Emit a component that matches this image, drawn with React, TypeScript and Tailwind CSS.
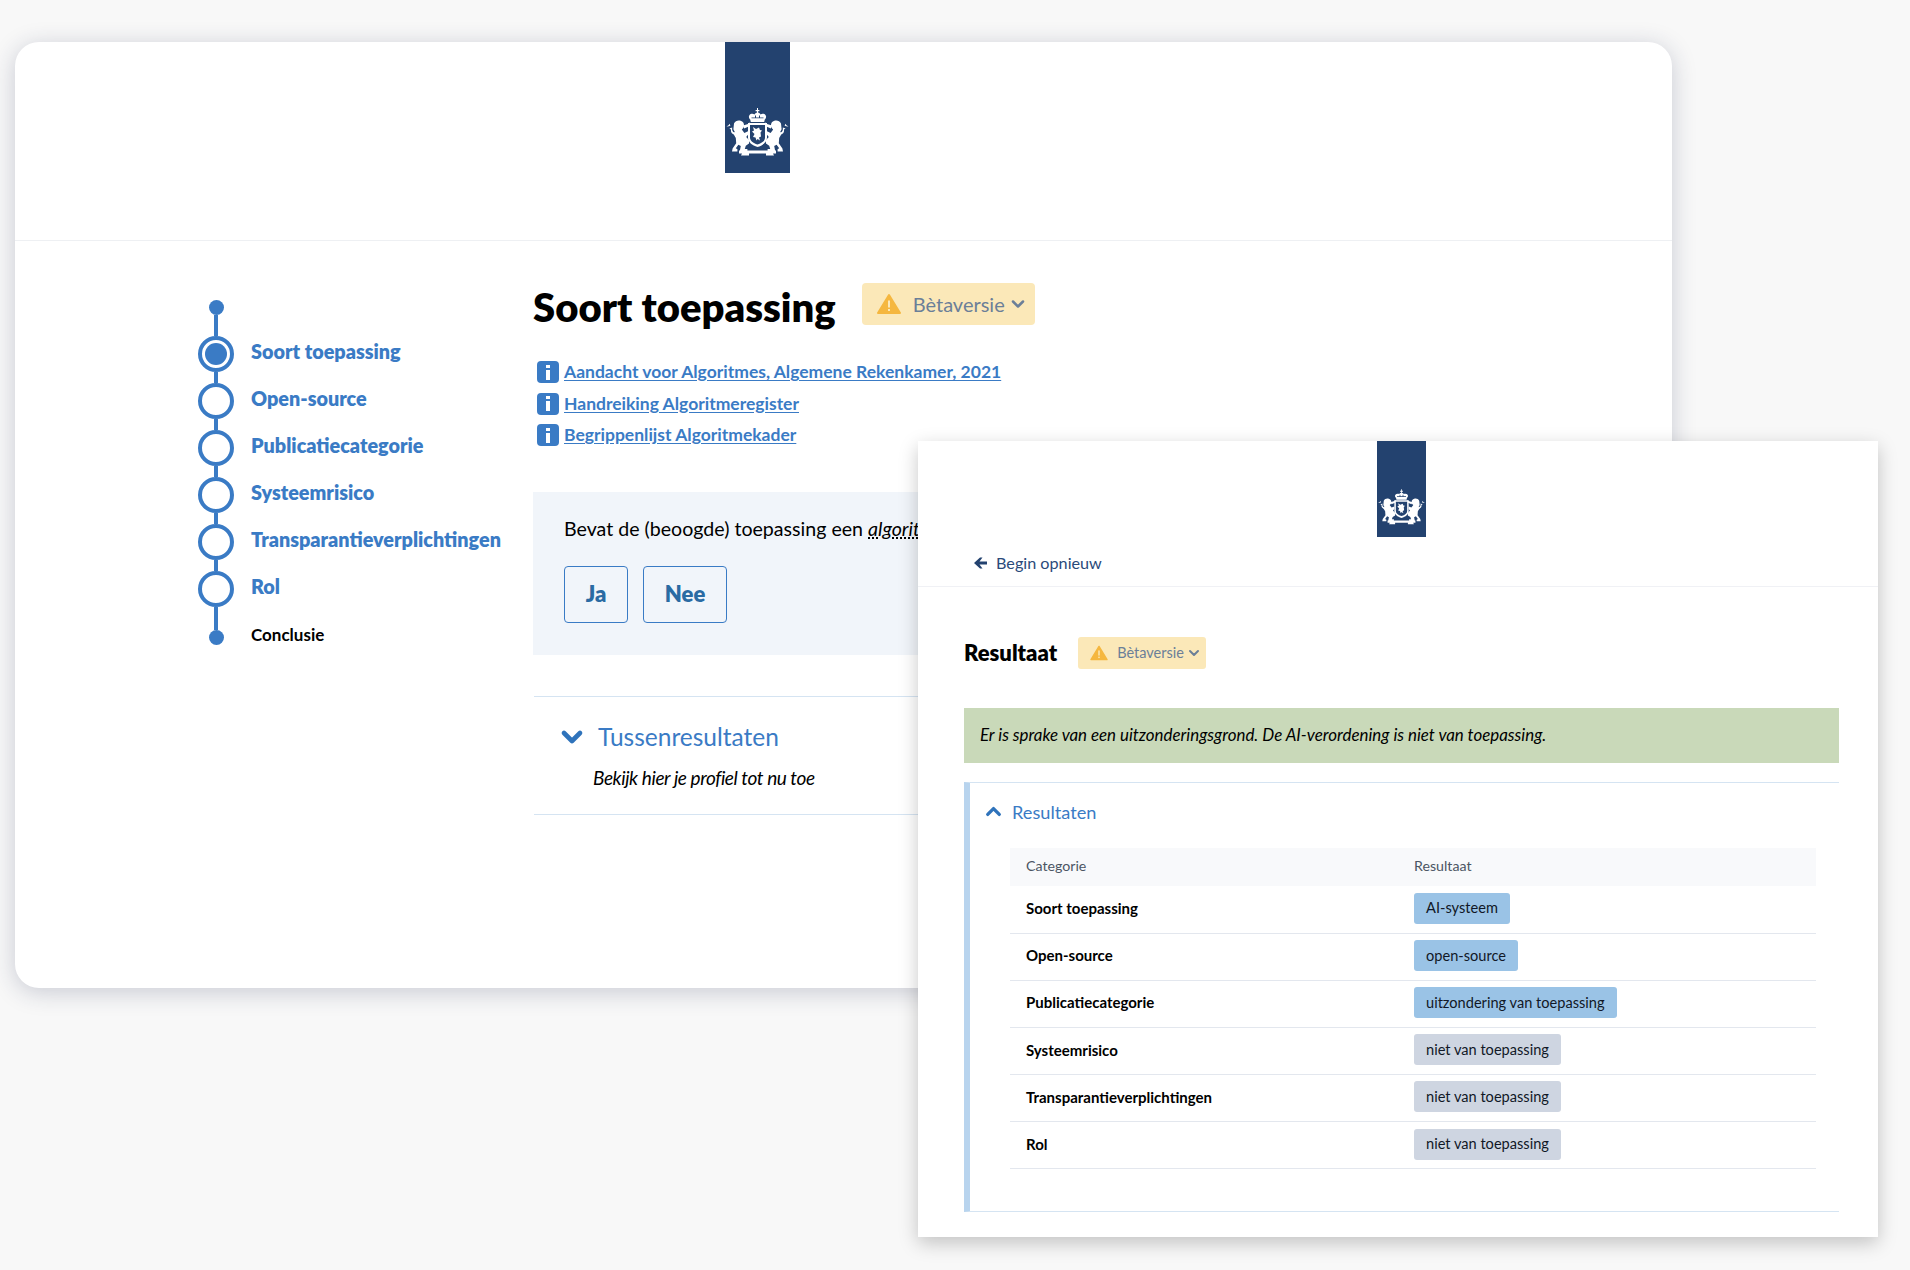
import { ChevronDown, ChevronUp } from "lucide-react";

const STEPS = [
  "Soort toepassing",
  "Open-source",
  "Publicatiecategorie",
  "Systeemrisico",
  "Transparantieverplichtingen",
  "Rol",
];

const LINKS = [
  "Aandacht voor Algoritmes, Algemene Rekenkamer, 2021",
  "Handreiking Algoritmeregister",
  "Begrippenlijst Algoritmekader",
];

const RESULTS = [
  { cat: "Soort toepassing", label: "AI-systeem", color: "bg-[#9ac3e6]" },
  { cat: "Open-source", label: "open-source", color: "bg-[#9ac3e6]" },
  { cat: "Publicatiecategorie", label: "uitzondering van toepassing", color: "bg-[#9ac3e6]" },
  { cat: "Systeemrisico", label: "niet van toepassing", color: "bg-[#ced5e1]" },
  { cat: "Transparantieverplichtingen", label: "niet van toepassing", color: "bg-[#ced5e1]" },
  { cat: "Rol", label: "niet van toepassing", color: "bg-[#ced5e1]" },
];

function Lion() {
  return (
    <g fill="#fff">
      {/* head + mane */}
      <path d="M9 81.5c1.2-2.6 4-3.6 6.6-2.8 2.4.7 3.6 2.5 3.4 4.8-.1 1.7-.9 3-2.2 4l2.6 3.4 3.6-1.6v3.4l-1.8 2.2 3 3.4-.2 3.2-3.2 2.2-1 3.2h2.6v2.2h-7.6l1-5.2-2.4-1.2-2.6 3.6 1.6 1v2.2H7l.6-3 3.6-5.2-.4-5.4-2.6-4.4 1.6-1.4-1.4-2.8z" />
      {/* tail */}
      <path d="M9.6 92.6c-2.6-.6-4-2.4-3.6-5.2l-1.6-.8 2.8-1.2c-.4 2.6.2 4.4 2.6 5.2z" />
      {/* forepaw */}
      <path d="M18 83.6l5-1.6 1.4-1.8.4 2.2 1.6.2-1.6 1.4-5.6 2.4z" />
      <path d="M4 84.2l-2.6.4 2.2-1.4 1-1.4.8 1.8z" />
    </g>
  );
}

// Rijksoverheid beeldmerk, simplified
function Logo({ className }: { className: string }) {
  return (
    <svg viewBox="0 0 65 131" className={className} preserveAspectRatio="none">
      <rect width="65" height="131" fill="#23426f" />
      <Lion />
      <g transform="translate(65 0) scale(-1 1)">
        <Lion />
      </g>
      {/* crown */}
      <path
        fill="#fff"
        d="M32 66h1v2h1.4v1.2H33v1.4c1.2.3 2 1 2.6 1.8 1.6-1 4-.6 5 .8 1 1.4.4 3.200-.8 4.400l-.6 2.400H25.800l-.6-2.400c-1.200-1.200-1.800-3-.8-4.400 1-1.400 3.400-1.800 5-.8.6-.8 1.400-1.500 2.600-1.800v-1.400h-1.400V68H32z"
      />
      <path fill="#23426f" d="M26.500 75.500h12v.8h-12zM30 73.500h1v2h-1zM34 73.500h1v2h-1z" />
      {/* shield */}
      <path fill="#fff" d="M23 81h19v14.500c0 4.500-4 8-9.500 9.500C27 103.500 23 100 23 95.500z" />
      <path
        fill="#23426f"
        d="M25 83h15v12.500c0 3.200-3 5.700-7.500 7-4.500-1.300-7.500-3.800-7.500-7z"
      />
      <path
        fill="#fff"
        d="M28 85l3 2 3-1.500 1 2.500 2 .5-1.500 2 .5 4-2 1 1 3-2.500-1.500-1 1.500-1-3-2.500-.5 1.500-3-2.500-2.500 2-1z"
      />
      {/* ribbon */}
      <path fill="#fff" d="M14 108.500h37v3H48l1 2H41v-2H24v2H16l1-2h-3z" />
    </svg>
  );
}

function InfoIcon() {
  return (
    <span className="flex h-[22px] w-[22px] shrink-0 flex-col items-center justify-center gap-[2px] rounded-[4px] bg-[#3a7bc5]">
      <span className="h-[3px] w-[4px] bg-white" />
      <span className="h-[10px] w-[4px] bg-white" />
    </span>
  );
}

function WarningIcon({ className }: { className: string }) {
  return (
    <svg viewBox="0 0 24 22" className={className}>
      <path
        fill="#f5b73f"
        stroke="#f5b73f"
        strokeWidth="2"
        strokeLinejoin="round"
        d="M12 2 23 20H1z"
      />
      <rect x="11" y="7.500" width="2" height="7" fill="#fbe8b8" />
      <rect x="11" y="16" width="2" height="2" fill="#fbe8b8" />
    </svg>
  );
}

function Stepper() {
  return (
    <div className="flex w-[335px] shrink-0 flex-col">
      <div className="flex h-[30px] w-9 flex-col items-center">
        <span className="h-[15px] w-[15px] rounded-full bg-[#3a7bc5]" />
        <span className="w-1 flex-1 bg-[#3a7bc5]" />
      </div>
      {STEPS.map((step, i) => (
        <div key={step} className="flex h-[47.1px] items-center gap-[17px]">
          <div className="flex h-full w-9 shrink-0 flex-col items-center">
            <span className="w-1 flex-1 bg-[#3a7bc5]" />
            <span className="flex h-9 w-9 shrink-0 items-center justify-center rounded-full border-4 border-[#3a7bc5] bg-white">
              {i === 0 && <span className="h-[22px] w-[22px] rounded-full bg-[#3a7bc5]" />}
            </span>
            <span className="w-1 flex-1 bg-[#3a7bc5]" />
          </div>
          <span className="mb-[4px] text-[19.8px] leading-none font-extrabold whitespace-nowrap text-[#3a7bc5]">
            {step}
          </span>
        </div>
      ))}
      <div className="flex h-[32px] items-end gap-[17px]">
        <div className="flex h-full w-9 shrink-0 flex-col items-center">
          <span className="w-1 flex-1 bg-[#3a7bc5]" />
          <span className="h-[15px] w-[15px] rounded-full bg-[#3a7bc5]" />
        </div>
        <span className="text-[17px] leading-[20px] font-bold text-black">Conclusie</span>
      </div>
    </div>
  );
}

function BackWindow() {
  return (
    <div className="absolute top-[42px] left-[15px] h-[946px] w-[1657px] overflow-hidden rounded-[24px] bg-white shadow-[0_4px_24px_rgba(30,40,80,0.22)]">
      <header className="h-[199px] border-b border-[#eef0f3] pl-[710px]">
        <Logo className="h-[131px] w-[65px]" />
      </header>
      <div className="flex pt-[42px] pl-[183px]">
        <div className="pt-[17px]">
          <Stepper />
        </div>
        <main className="w-[1000px]">
          <div className="flex h-[50px] items-start gap-[26px]">
            <h1 className="text-[40px] leading-[48px] font-extrabold text-black">Soort toepassing</h1>
            <button className="flex h-[42px] w-[173px] items-center gap-[9px] rounded-[4px] bg-[#fbe8b8] pl-[15px] text-[20px] text-[#6b7f98]">
              <WarningIcon className="h-[22px] w-[24px]" />
              <span className="ml-[3px]">Bètaversie</span>
              <ChevronDown className="-ml-[6px] h-[20px] w-[20px]" strokeWidth={3} />
            </button>
          </div>
          <ul className="mt-[28px] ml-[4px] flex flex-col gap-[9.500px]">
            {LINKS.map((link) => (
              <li key={link} className="flex h-[22px] items-center gap-[5px]">
                <InfoIcon />
                <a className="text-[17.5px] leading-[22px] font-bold text-[#3a7bc5] underline underline-offset-2">
                  {link}
                </a>
              </li>
            ))}
          </ul>
          <section className="mt-[46px] h-[163px] bg-[#f1f5fa] pt-[24px] pl-[31px]">
            <p className="text-[19.6px] leading-[26px] text-black">
              Bevat de (beoogde) toepassing een{" "}
              <em className="underline decoration-dotted underline-offset-2">algoritme</em>?
            </p>
            <div className="mt-[24px] flex gap-[15px]">
              <button className="h-[57px] w-[64px] rounded-[4px] border-[1.500px] border-[#3a7bc5] pb-[2px] text-[22px] font-extrabold text-[#2a6ba3]">
                Ja
              </button>
              <button className="h-[57px] w-[84px] rounded-[4px] border-[1.500px] border-[#3a7bc5] pb-[2px] text-[22px] font-extrabold text-[#2a6ba3]">
                Nee
              </button>
            </div>
          </section>
          <section className="mt-[41px] ml-[1px] h-[119px] border-y border-[#d5e4f2] pt-[24px]">
            <div className="flex items-center gap-[10px] pl-[22px]">
              <ChevronDown className="h-[32px] w-[32px] text-[#2f73bb]" strokeWidth={3.500} />
              <span className="text-[24.500px] leading-[32px] text-[#3a7bc5]">Tussenresultaten</span>
            </div>
            <p className="mt-[12px] pl-[59px] text-[19px] leading-[26px] tracking-[-0.4px] text-black italic">
              Bekijk hier je profiel tot nu toe
            </p>
          </section>
        </main>
      </div>
    </div>
  );
}

function FrontWindow() {
  return (
    <div className="absolute top-[441px] left-[918px] h-[796px] w-[960px] bg-white shadow-[0_6px_18px_rgba(0,0,0,0.22)]">
      <header className="h-[146px] border-b border-[#f0f1f5]">
        <div className="pl-[459px]">
          <Logo className="h-[96px] w-[49px]" />
        </div>
        <div className="mt-[14px] flex items-center gap-[9px] pl-[56px] text-[16.2px] leading-[24px] text-[#2a4a7a]">
          <svg viewBox="0 0 13 12" className="h-[12px] w-[13px]">
            <path fill="#23426f" d="M0 6 6 .5h2.500L5.500 4.400H13v3.200H5.500l3 3.900H6z" />
          </svg>
          Begin opnieuw
        </div>
      </header>
      <div className="pt-[50px] pr-[39px] pl-[46px]">
        <div className="flex items-center gap-[21px]">
          <h2 className="text-[22px] leading-[32px] font-extrabold text-black">Resultaat</h2>
          <button className="flex h-[32px] w-[128px] items-center gap-[9px] rounded-[3px] bg-[#fbe8b8] pl-[12px] text-[14.500px] text-[#6b7f98]">
            <WarningIcon className="h-[16px] w-[18px]" />
            <span>Bètaversie</span>
            <ChevronDown className="-ml-[7px] h-[16px] w-[16px]" strokeWidth={3} />
          </button>
        </div>
        <div className="mt-[39px] flex h-[55px] items-center bg-[#c9d9b9] pb-[2px] pl-[16px] text-[16.900px] text-black italic">
          Er is sprake van een uitzonderingsgrond. De AI-verordening is niet van toepassing.
        </div>
        <section className="mt-[19px] h-[430px] border-y border-[#d5e4f2] border-l-[6px] border-l-[#b8d4ee] pt-[17px]">
          <div className="flex items-center gap-[7px] pl-[12px]">
            <ChevronUp className="h-[23px] w-[23px] text-[#2f73bb]" strokeWidth={3.500} />
            <span className="text-[18.200px] leading-[22px] text-[#3a7bc5]">Resultaten</span>
          </div>
          <table className="mt-[25px] ml-[40px] w-[806px] table-fixed border-collapse">
            <thead>
              <tr className="h-[38px] bg-[#f8f9fb] text-left text-[14.200px] text-[#4b5563]">
                <th className="w-[404px] pb-[2px] pl-[16px] font-normal">Categorie</th>
                <th className="pb-[2px] font-normal">Resultaat</th>
              </tr>
            </thead>
            <tbody>
              {RESULTS.map((r) => (
                <tr key={r.cat} className="h-[47.100px] border-b border-[#e3e7ee]">
                  <td className="pb-[2px] pl-[16px] text-[15px] font-bold text-black">{r.cat}</td>
                  <td className="pb-[2px]">
                    <span
                      className={`inline-flex h-[31px] items-center rounded-[3px] px-[12px] align-middle text-[14.600px] text-[#111827] ${r.color}`}
                    >
                      {r.label}
                    </span>
                  </td>
                </tr>
              ))}
            </tbody>
          </table>
        </section>
      </div>
    </div>
  );
}

export default function App() {
  return (
    <div className="relative h-[1270px] w-[1910px] overflow-hidden bg-[#f8f8f8] font-['Lato',sans-serif]">
      <BackWindow />
      <FrontWindow />
    </div>
  );
}
